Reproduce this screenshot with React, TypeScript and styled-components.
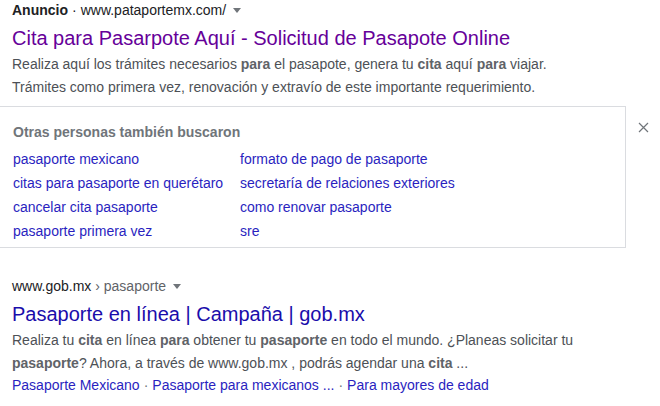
import React from "react";
import styled, { createGlobalStyle } from "styled-components";

const Global = createGlobalStyle`
  html, body { margin: 0; padding: 0; background: #fff; }
  body { font-family: Arial, "Liberation Sans", sans-serif; overflow: hidden; }
`;

const Page = styled.div`
  padding: 1px 0 0 12px;
  width: 648px;
`;

const Result = styled.div<{ $top?: number }>`
  margin-top: ${(p) => p.$top ?? 0}px;
`;

const UrlLine = styled.div`
  display: flex;
  align-items: center;
  font-size: 14px;
  line-height: 18px;
  color: #202124;
  white-space: nowrap;
`;

const AdLabel = styled.span`
  font-weight: bold;
  color: #202124;
`;

const Dot = styled.span`
  margin: 0 4px;
  color: #202124;
`;

const Crumb = styled.span`
  color: #5f6368;
`;

const Arrow = styled.span`
  display: inline-block;
  width: 0;
  height: 0;
  margin-left: 7px;
  margin-top: 1px;
  border-left: 4px solid transparent;
  border-right: 4px solid transparent;
  border-top: 5px solid #70757a;
`;

const Title = styled.h3<{ $visited?: boolean }>`
  margin: 6px 0 0;
  font-size: 20px;
  font-weight: normal;
  line-height: 26px;
  color: ${(p) => (p.$visited ? "#660099" : "#1a0dab")};
  white-space: nowrap;
`;

const Snippet = styled.div`
  margin-top: 2px;
  font-size: 14px;
  line-height: 22.6px;
  color: #4d5156;
  b { font-weight: bold; color: #5f6368; }
`;

const RelatedRow = styled.div`
  display: flex;
  align-items: flex-start;
  margin-top: 8px;
`;

const RelatedBox = styled.div`
  margin-left: -20px;
  width: 612px;
  padding: 15px 0 4px 20px;
  border: 1px solid #dadce0;
`;

const RelatedHeader = styled.div`
  font-size: 14px;
  font-weight: bold;
  line-height: 20px;
  color: #70757a;
  margin-bottom: 5px;
`;

const LinkGrid = styled.div`
  display: grid;
  grid-template-columns: 227px auto;
`;

const RLink = styled.a`
  font-size: 14px;
  line-height: 24px;
  color: #2a1fc0;
  text-decoration: none;
  white-space: nowrap;
`;

const CloseBtn = styled.button`
  display: flex;
  align-items: center;
  justify-content: center;
  margin: 15px 0 0 11px;
  padding: 0;
  width: 12px;
  height: 12px;
  border: 0;
  background: none;
`;

const Sitelinks = styled.div`
  font-size: 14px;
  line-height: 22.6px;
  white-space: nowrap;
`;

const SiteLink = styled.a`
  color: #2a1fc0;
  text-decoration: none;
`;

const Sep = styled.span`
  color: #70757a;
  margin: 0 4px;
`;

const related = [
  ["pasaporte mexicano", "formato de pago de pasaporte"],
  ["citas para pasaporte en querétaro", "secretaría de relaciones exteriores"],
  ["cancelar cita pasaporte", "como renovar pasaporte"],
  ["pasaporte primera vez", "sre"],
];

export default function App() {
  return (
    <>
      <Global />
      <Page>
        <Result>
          <UrlLine>
            <AdLabel>Anuncio</AdLabel>
            <Dot>·</Dot>
            <span>www.pataportemx.com/</span>
            <Arrow />
          </UrlLine>
          <Title $visited>Cita para Pasarpote Aquí - Solicitud de Pasapote Online</Title>
          <Snippet>
            Realiza aquí los trámites necesarios <b>para</b> el pasapote, genera tu <b>cita</b> aquí{" "}
            <b>para</b> viajar.
            <br />
            Trámites como primera vez, renovación y extravío de este importante requerimiento.
          </Snippet>
        </Result>

        <RelatedRow>
          <RelatedBox>
            <RelatedHeader>Otras personas también buscaron</RelatedHeader>
            <LinkGrid>
              {related.flat().map((t) => (
                <RLink key={t} href="#">
                  {t}
                </RLink>
              ))}
            </LinkGrid>
          </RelatedBox>
          <CloseBtn aria-label="Cerrar">
            <svg width="11" height="11" viewBox="0 0 11 11">
              <path d="M1 1L10 10M10 1L1 10" stroke="#70757a" strokeWidth="1.2" fill="none" />
            </svg>
          </CloseBtn>
        </RelatedRow>

        <Result $top={29}>
          <UrlLine>
            <span>www.gob.mx</span>
            <Crumb>&nbsp;› pasaporte</Crumb>
            <Arrow />
          </UrlLine>
          <Title>Pasaporte en línea | Campaña | gob.mx</Title>
          <Snippet>
            Realiza tu <b>cita</b> en línea <b>para</b> obtener tu <b>pasaporte</b> en todo el mundo. ¿Planeas solicitar tu
            <br />
            <b>pasaporte</b>? Ahora, a través de www.gob.mx , podrás agendar una <b>cita</b> ...
          </Snippet>
          <Sitelinks>
            <SiteLink href="#">Pasaporte Mexicano</SiteLink>
            <Sep>·</Sep>
            <SiteLink href="#">Pasaporte para mexicanos ...</SiteLink>
            <Sep>·</Sep>
            <SiteLink href="#">Para mayores de edad</SiteLink>
          </Sitelinks>
        </Result>
      </Page>
    </>
  );
}
